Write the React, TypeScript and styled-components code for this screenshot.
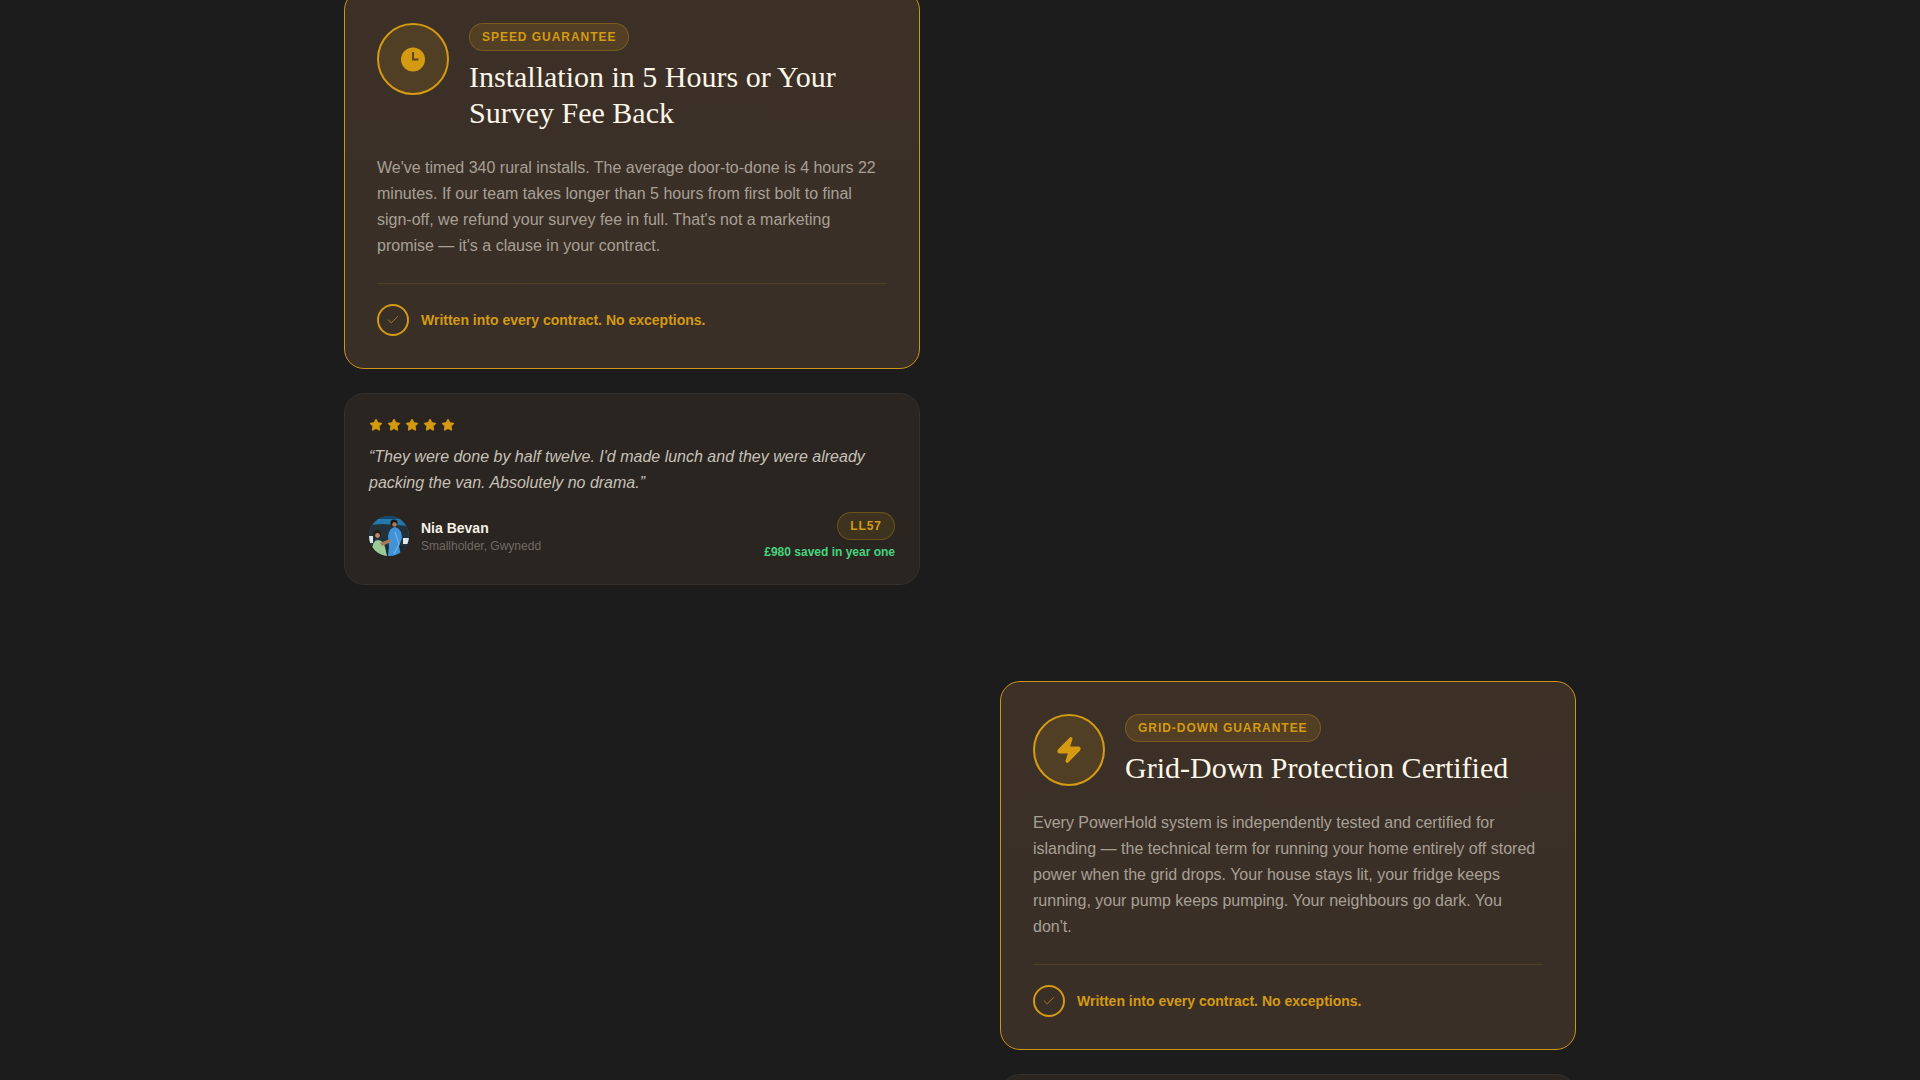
import React from "react";
import styled, { createGlobalStyle } from "styled-components";
import { Star, Check, Zap } from "lucide-react";

const Global = createGlobalStyle`
  html, body { margin: 0; padding: 0; height: 1080px; overflow: hidden; background: #1c1c1c; }
  body { font-family: "Liberation Sans", Arial, sans-serif; }
`;

const gold = "#d49a12";

const Timeline = styled.main`
  width: 1232px;
  margin: -10px auto 0;
  display: grid;
  grid-template-columns: 576px 576px;
  column-gap: 80px;
  row-gap: 96px;
`;

const Item = styled.section<{ $column: number; $row: number }>`
  grid-column: ${(p) => p.$column};
  grid-row: ${(p) => p.$row};
  display: flex;
  flex-direction: column;
  gap: 24px;
`;

const GuaranteeCard = styled.article`
  border: 1px solid #cb9518;
  border-radius: 20px;
  padding: 32px;
  background: linear-gradient(180deg, #3c3027 0%, #392f27 100%);
`;

const CardHead = styled.header`
  display: flex;
  align-items: flex-start;
  gap: 20px;
  margin-bottom: 24px;
`;

const IconRing = styled.div`
  width: 72px;
  height: 72px;
  flex: none;
  box-sizing: border-box;
  border: 2px solid ${gold};
  border-radius: 50%;
  background: #503e25;
  display: flex;
  align-items: center;
  justify-content: center;
  color: ${gold};
`;

const Badge = styled.span`
  display: inline-flex;
  align-items: center;
  box-sizing: border-box;
  height: 28px;
  padding: 0 12px;
  border: 1px solid rgba(212, 154, 18, 0.3);
  border-radius: 999px;
  background: rgba(212, 154, 18, 0.15);
  color: ${gold};
  font-size: 12px;
  font-weight: 700;
  letter-spacing: 0.96px;
  text-transform: uppercase;
`;

const Title = styled.h3`
  margin: 8px 0 0;
  font-family: "Liberation Serif", "Times New Roman", serif;
  font-size: 30px;
  font-weight: 400;
  line-height: 36px;
  color: #fdf6e8;
`;

const Body = styled.p`
  margin: 0 0 24px;
  font-size: 16px;
  line-height: 26px;
  color: #a8a095;
`;

const CardFoot = styled.footer`
  display: flex;
  align-items: center;
  gap: 12px;
  padding-top: 20px;
  border-top: 1px solid rgba(212, 154, 18, 0.15);
`;

const CheckRing = styled.span`
  width: 32px;
  height: 32px;
  box-sizing: border-box;
  flex: none;
  border: 2px solid ${gold};
  border-radius: 50%;
  display: flex;
  align-items: center;
  justify-content: center;
  color: ${gold};
`;

const FootText = styled.span`
  font-size: 14px;
  font-weight: 700;
  color: ${gold};
`;

const QuoteCard = styled.article`
  border: 1px solid #35302b;
  border-radius: 20px;
  padding: 24px;
  background: #2a2521;
`;

const Stars = styled.div`
  display: flex;
  gap: 4px;
  height: 14px;
  margin-bottom: 12px;
  color: ${gold};
`;

const Quote = styled.blockquote`
  margin: 0 0 16px;
  font-size: 16px;
  font-style: italic;
  line-height: 26px;
  color: #c6c0b6;
`;

const QuoteFoot = styled.footer`
  display: flex;
  align-items: center;
  justify-content: space-between;
`;

const Person = styled.div`
  display: flex;
  align-items: center;
  gap: 12px;
`;

const AvatarClip = styled.div`
  width: 40px;
  height: 40px;
  border-radius: 50%;
  overflow: hidden;
  flex: none;
  svg { display: block; }
`;

const Name = styled.div`
  font-size: 14px;
  font-weight: 700;
  line-height: 18px;
  color: #f5f0e6;
`;

const Role = styled.div`
  font-size: 12px;
  line-height: 16px;
  margin-top: 1px;
  color: #6f6a63;
`;

const Outcome = styled.div`
  display: flex;
  flex-direction: column;
  align-items: flex-end;
  gap: 4px;
`;

const Postcode = styled.span`
  display: inline-flex;
  align-items: center;
  box-sizing: border-box;
  height: 28px;
  padding: 0 12px;
  border: 1px solid rgba(212, 154, 18, 0.3);
  border-radius: 999px;
  background: rgba(212, 154, 18, 0.12);
  color: ${gold};
  font-size: 12px;
  font-weight: 700;
  letter-spacing: 0.96px;
`;

const Saved = styled.span`
  font-size: 12px;
  font-weight: 700;
  line-height: 16px;
  color: #46d47c;
`;

const NextCard = styled(QuoteCard)`
  height: 180px;
  box-sizing: border-box;
`;

function ClockMark() {
  return (
    <svg width="26" height="26" viewBox="0 0 26 26" aria-hidden="true">
      <circle cx="13" cy="13.5" r="12" fill={gold} />
      <path d="M13 6V13.5H18.5" fill="none" stroke="#5c4520" strokeWidth="2" />
    </svg>
  );
}

function Avatar() {
  return (
    <AvatarClip>
      <svg width="40" height="40" viewBox="0 0 40 40" aria-hidden="true">
        <rect width="40" height="40" fill="#2478ad" />
        <rect width="40" height="3" fill="#14476b" />
        <path d="M0 9 L14 8 L40 10 V40 H0Z" fill="#23323a" />
        <rect y="20" width="4" height="7" fill="#dfe8ea" />
        <rect x="34" y="22" width="6" height="6" fill="#dfe8ea" />
        <path d="M0 30 H40 V40 H0Z" fill="#1a2a33" />
        <circle cx="8" cy="18" r="4" fill="#2b1d16" />
        <circle cx="8.5" cy="19.5" r="2.4" fill="#b98a6c" />
        <path d="M3 36 Q3 24 9 24 Q15 25 16 31 L18 40 H5Z" fill="#98cc94" />
        <circle cx="25" cy="7" r="3.6" fill="#23180f" />
        <circle cx="25.5" cy="8.5" r="2.3" fill="#a97a58" />
        <path d="M19 20 Q20 12 26 11 Q33 13 33 22 L30 30 L32 40 H19 L20 30Z" fill="#4193d8" />
        <path d="M26 16 L30 28 L25 38" fill="none" stroke="#6fb2e8" strokeWidth="1.2" />
        <path d="M11 27 L21 23 L22 26 L13 30Z" fill="#a97a58" />
      </svg>
    </AvatarClip>
  );
}

function Guarantee(props: { icon: React.ReactNode; badge: string; title: React.ReactNode; body: string }) {
  return (
    <GuaranteeCard>
      <CardHead>
        <IconRing>{props.icon}</IconRing>
        <div>
          <Badge>{props.badge}</Badge>
          <Title>{props.title}</Title>
        </div>
      </CardHead>
      <Body>{props.body}</Body>
      <CardFoot>
        <CheckRing>
          <Check size={14} strokeWidth={1.25} />
        </CheckRing>
        <FootText>Written into every contract. No exceptions.</FootText>
      </CardFoot>
    </GuaranteeCard>
  );
}

export default function App() {
  return (
    <>
      <Global />
      <Timeline>
        <Item $column={1} $row={1}>
          <Guarantee
            icon={<ClockMark />}
            badge="Speed Guarantee"
            title="Installation in 5 Hours or Your Survey Fee Back"
            body="We've timed 340 rural installs. The average door-to-done is 4 hours 22 minutes. If our team takes longer than 5 hours from first bolt to final sign-off, we refund your survey fee in full. That's not a marketing promise — it's a clause in your contract."
          />
          <QuoteCard>
            <Stars>
              {[0, 1, 2, 3, 4].map((i) => (
                <Star key={i} size={14} fill={gold} strokeWidth={1.5} />
              ))}
            </Stars>
            <Quote>“They were done by half twelve. I'd made lunch and they were already packing the van. Absolutely no drama.”</Quote>
            <QuoteFoot>
              <Person>
                <Avatar />
                <div>
                  <Name>Nia Bevan</Name>
                  <Role>Smallholder, Gwynedd</Role>
                </div>
              </Person>
              <Outcome>
                <Postcode>LL57</Postcode>
                <Saved>£980 saved in year one</Saved>
              </Outcome>
            </QuoteFoot>
          </QuoteCard>
        </Item>
        <Item $column={2} $row={2}>
          <Guarantee
            icon={<Zap size={28} fill={gold} strokeWidth={2} />}
            badge="Grid-Down Guarantee"
            title="Grid-Down Protection Certified"
            body="Every PowerHold system is independently tested and certified for islanding — the technical term for running your home entirely off stored power when the grid drops. Your house stays lit, your fridge keeps running, your pump keeps pumping. Your neighbours go dark. You don't."
          />
          <NextCard />
        </Item>
      </Timeline>
    </>
  );
}
